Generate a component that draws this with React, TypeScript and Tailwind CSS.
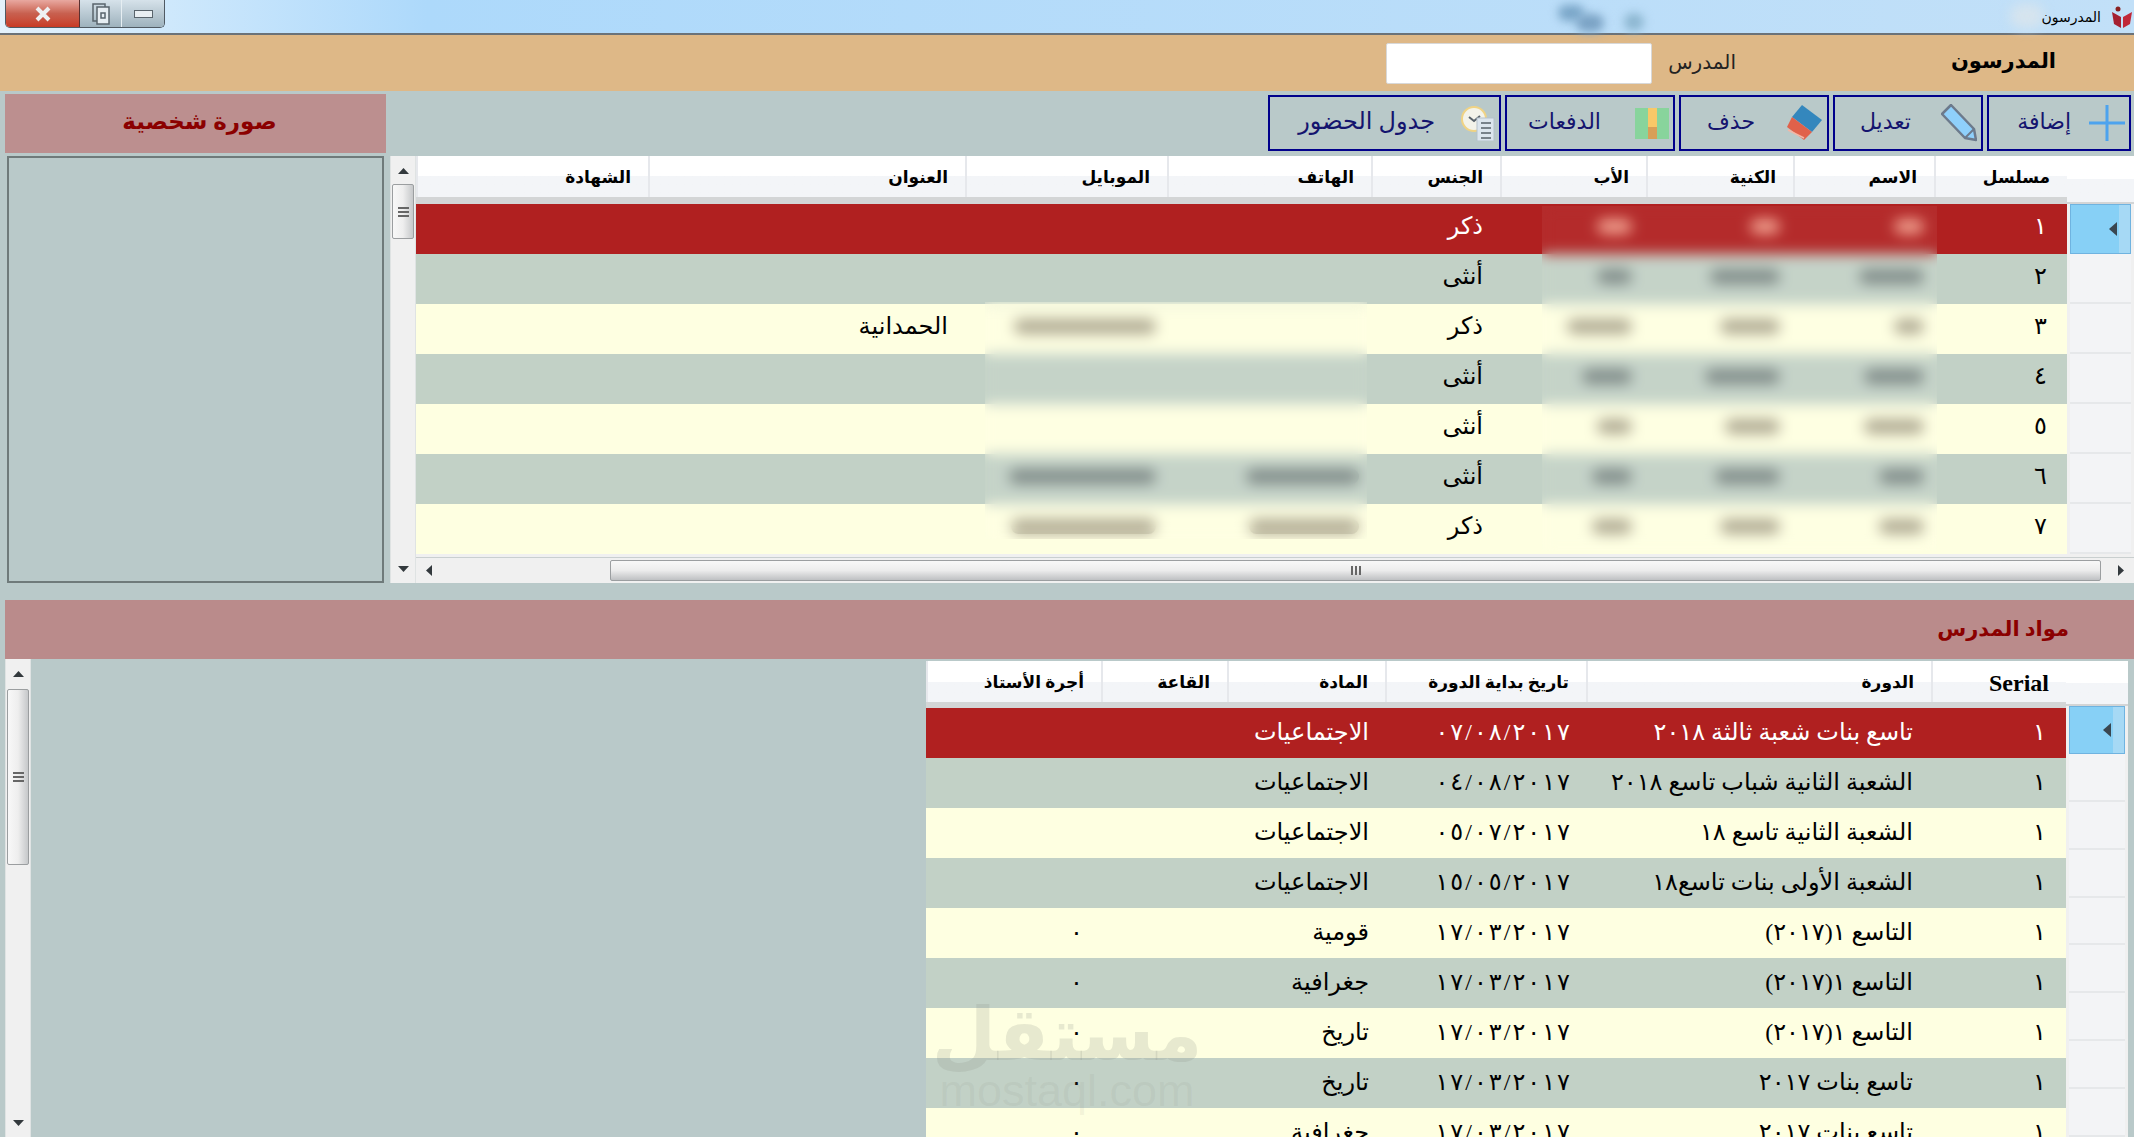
import { Fragment } from 'react';

const serif = "font-['Liberation_Serif','DejaVu_Sans',serif]";

const topCols = [
  { title: 'مسلسل' },
  { title: 'الاسم' },
  { title: 'الكنية' },
  { title: 'الأب' },
  { title: 'الجنس' },
  { title: 'الهاتف' },
  { title: 'الموبايل' },
  { title: 'العنوان' },
  { title: 'الشهادة' },
];

const teachers = [
  { n: '١', g: 'ذكر', name: 30, kunya: 30, father: 35, addr: '', phone: 0, mobile: 0 },
  { n: '٢', g: 'أنثى', name: 65, kunya: 70, father: 35, addr: '', phone: 0, mobile: 0 },
  { n: '٣', g: 'ذكر', name: 30, kunya: 60, father: 65, addr: 'الحمدانية', phone: 0, mobile: 142 },
  { n: '٤', g: 'أنثى', name: 60, kunya: 75, father: 50, addr: '', phone: 0, mobile: 0 },
  { n: '٥', g: 'أنثى', name: 60, kunya: 55, father: 35, addr: '', phone: 0, mobile: 0 },
  { n: '٦', g: 'أنثى', name: 45, kunya: 65, father: 40, addr: '', phone: 113, mobile: 147 },
  { n: '٧', g: 'ذكر', name: 45, kunya: 60, father: 40, addr: '', phone: 110, mobile: 145 },
];

const courses = [
  ['تاسع بنات شعبة ثالثة ٢٠١٨', '٠٧/٠٨/٢٠١٧', 'الاجتماعيات', ''],
  ['الشعبة الثانية شباب تاسع ٢٠١٨', '٠٤/٠٨/٢٠١٧', 'الاجتماعيات', ''],
  ['الشعبة الثانية تاسع ١٨', '٠٥/٠٧/٢٠١٧', 'الاجتماعيات', ''],
  ['الشعبة الأولى بنات تاسع١٨', '١٥/٠٥/٢٠١٧', 'الاجتماعيات', ''],
  ['التاسع ١(٢٠١٧)', '١٧/٠٣/٢٠١٧', 'قومية', '٠'],
  ['التاسع ١(٢٠١٧)', '١٧/٠٣/٢٠١٧', 'جغرافية', '٠'],
  ['التاسع ١(٢٠١٧)', '١٧/٠٣/٢٠١٧', 'تاريخ', '٠'],
  ['تاسع بنات ٢٠١٧', '١٧/٠٣/٢٠١٧', 'تاريخ', '٠'],
  ['تاسع بنات ٢٠١٧', '١٧/٠٣/٢٠١٧', 'جغرافية', '٠'],
];

function rowBg(i: number) {
  if (i === 0) return 'bg-[#b02020] text-white';
  return i % 2 === 1 ? 'bg-[#c2d1c6] text-black' : 'bg-[#feffe1] text-black';
}

function pillBg(i: number) {
  if (i === 0) return 'bg-[#f09a88]';
  return i % 2 === 1 ? 'bg-[#7b8784]' : 'bg-[#aca68e]';
}

// letter-spacing is ignored on arabic digits, so the wide date look comes from hair spaces
// the LRM keeps the digits in reading order
function spaced(date: string) {
  return date.split('').join('\u200a\u200e');
}

function HeadCell({ title }: { title: string }) {
  return (
    <div className="h-[41px] flex items-center pt-[2px] pr-[17px] border-l-2 border-[#e6e8ec] bg-gradient-to-b from-white from-50% to-[#f3f5f8] to-50% font-bold text-[17px] text-black">
      {title}
    </div>
  );
}

function RowHeader({ active }: { active: boolean }) {
  if (active) {
    return (
      <div className="h-[50px] ml-[3px] mr-[3px] bg-[#87d0f6] border border-[#6fb3e0] flex items-center justify-end">
        <svg width="8" height="14" viewBox="0 0 8 14"><path d="M8 0 L0 7 L8 14 Z" fill="#3a4650" /></svg>
        <div className="w-[11px] h-full ml-[2px] bg-[#a6d9f5]" />
      </div>
    );
  }
  return <div className="h-[50px] ml-[3px] mr-[3px] bg-[#f3f4f6] border-b-2 border-[#e6e8ea]" />;
}

function VScroll({ thumb }: { thumb: string }) {
  return (
    <div className="w-[26px] shrink-0 bg-[#f0f0f0] border-x border-[#dfe3e3] flex flex-col items-center relative">
      <svg className="mt-[12px] shrink-0" width="11" height="6" viewBox="0 0 11 6"><path d="M5.5 0 L11 6 L0 6 Z" fill="#33393d" /></svg>
      <div className={`w-[22px] shrink-0 rounded-[2px] border border-[#9b9ea0] bg-gradient-to-r from-[#f8f8f8] via-[#eeeeee] to-[#c6c8ca] flex flex-col items-center justify-center gap-[2px] ${thumb}`}>
        <div className="w-[11px] h-[2px] bg-[#666]" />
        <div className="w-[11px] h-[2px] bg-[#666]" />
        <div className="w-[11px] h-[2px] bg-[#666]" />
      </div>
      <svg className="absolute bottom-[11px]" width="11" height="6" viewBox="0 0 11 6"><path d="M0 0 L11 0 L5.5 6 Z" fill="#33393d" /></svg>
    </div>
  );
}

function HScroll() {
  return (
    <div className="h-[26px] bg-[#f0f0f0] flex items-center border-t border-[#c9cfcf]">
      <svg className="ml-[10px] shrink-0" width="6" height="11" viewBox="0 0 6 11"><path d="M6 0 L0 5.5 L6 11 Z" fill="#33393d" /></svg>
      <div className="ml-[178px] w-[1491px] h-[21px] rounded-[2px] border border-[#9b9ea0] bg-gradient-to-b from-[#f8f8f8] via-[#ececec] to-[#bfc1c3] flex items-center justify-center gap-[2px]">
        <div className="w-[2px] h-[9px] bg-[#666]" />
        <div className="w-[2px] h-[9px] bg-[#666]" />
        <div className="w-[2px] h-[9px] bg-[#666]" />
      </div>
      <svg className="ml-[17px] shrink-0" width="6" height="11" viewBox="0 0 6 11"><path d="M0 0 L6 5.5 L0 11 Z" fill="#33393d" /></svg>
    </div>
  );
}

function Pill({ width, color }: { width: number; color: string }) {
  if (!width) return null;
  return <div className={`h-[15px] rounded-full ${color}`} style={{ width }} />;
}

function ToolButton({ label, icon, className }: { label: string; icon: React.ReactNode; className: string }) {
  return (
    <button className={`h-[56px] border-2 border-[#00008b] flex items-center pr-[4px] text-[#14146e] ${className}`}>
      {icon}
      <span className="pb-[4px]">{label}</span>
    </button>
  );
}

function TopGrid() {
  return (
    <div className="flex h-[428px] flex-1 min-w-0">
      <VScroll thumb="mt-[10px] h-[55px]" />
      <div className="flex-1 flex flex-col min-w-0 bg-[#f0f0f0]">
        <div className="flex flex-1 min-h-0">
          <div dir="rtl" className="w-[1651px] flex flex-col relative overflow-hidden">
            <div className="grid grid-cols-[133px_141px_147px_146px_129px_204px_202px_317px_232px] border-b-[7px] border-b-[#d3d5d6] bg-white">
              {topCols.map((c) => (
                <HeadCell key={c.title} title={c.title} />
              ))}
            </div>
            {teachers.map((t, i) => (
              <div key={t.n} className={`h-[50px] pb-[6px] grid grid-cols-[133px_141px_147px_146px_129px_204px_202px_317px_232px] items-center text-[24px] ${rowBg(i)}`}>
                <div className="pr-[20px]">{t.n}</div>
                <div className="pr-[10px]"><Pill width={t.name} color={pillBg(i)} /></div>
                <div className="pr-[13px]"><Pill width={t.kunya} color={pillBg(i)} /></div>
                <div className="pr-[14px]"><Pill width={t.father} color={pillBg(i)} /></div>
                <div className="pr-[17px]">{t.g}</div>
                <div className="pr-[12px]"><Pill width={t.phone} color={pillBg(i)} /></div>
                <div className="pr-[11px]"><Pill width={t.mobile} color={pillBg(i)} /></div>
                <div className="pr-[17px]">{t.addr}</div>
                <div />
              </div>
            ))}
            {/* masked columns, same as the blurred parts of the screenshot */}
            <div className="absolute left-[1126px] w-[395px] top-[50px] h-[345px] backdrop-blur-[7px] bg-white/5" />
            <div className="absolute left-[569px] w-[382px] top-[146px] h-[237px] backdrop-blur-[7px] bg-white/5" />
          </div>
          <div className="flex-1 flex flex-col">
            <div className="h-[48px] bg-gradient-to-b from-white from-50% to-[#f3f5f8] to-50% border-b-2 border-[#d3d5d6]" />
            {teachers.map((t, i) => (
              <RowHeader key={t.n} active={i === 0} />
            ))}
          </div>
        </div>
        <HScroll />
      </div>
    </div>
  );
}

function BottomGrid() {
  const cols = 'grid-cols-[135px_345px_201px_158px_126px_175px]';
  return (
    <div className="flex w-[1202px] mr-[6px] mt-[2px] bg-[#f0f0f0]">
      <div dir="rtl" className="w-[1140px] relative flex flex-col">
        <div className={`grid ${cols} border-b-[6px] border-b-[#d3d5d6] bg-white`}>
          <div className="h-[41px] flex items-center pt-[2px] pr-[17px] border-l-2 border-[#e6e8ec] bg-gradient-to-b from-white from-50% to-[#f3f5f8] to-50% font-bold text-[24px] text-black font-['Liberation_Serif',serif]">Serial</div>
          <HeadCell title="الدورة" />
          <HeadCell title="تاريخ بداية الدورة" />
          <HeadCell title="المادة" />
          <HeadCell title="القاعة" />
          <HeadCell title="أجرة الأستاذ" />
        </div>
        {courses.map((c, i) => (
          <div key={i} className={`h-[50px] pb-[3px] shrink-0 grid ${cols} items-center text-[24px] ${rowBg(i)}`}>
            <div className="pr-[20px]">١</div>
            <div className="pr-[18px]">{c[0]}</div>
            <div className="pr-[16px] whitespace-nowrap"><bdi dir="ltr">{spaced(c[1])}</bdi></div>
            <div className="pr-[16px]">{c[2]}</div>
            <div />
            <div className="pr-[18px]">{c[3]}</div>
          </div>
        ))}
        {/* mostaql watermark */}
        <div className="absolute left-[12px] top-[336px] w-[258px] flex flex-col items-center pointer-events-none">
          <div className="text-[74px] leading-[76px] font-bold text-[#8b8f85]/20">مستقل</div>
          <div dir="ltr" className="text-[45px] leading-[36px] text-[#8b8f85]/10 font-['Liberation_Sans',sans-serif]">mostaql.com</div>
        </div>
      </div>
      <div className="flex-1 flex flex-col">
        <div className="h-[47px] bg-gradient-to-b from-white from-50% to-[#f3f5f8] to-50% border-b-2 border-[#d3d5d6]" />
        {courses.map((_, i) => (
          <Fragment key={i}>
            <RowHeader active={i === 0} />
          </Fragment>
        ))}
      </div>
    </div>
  );
}

export default function App() {
  return (
    <div className={`h-[1137px] w-[2134px] overflow-hidden flex flex-col bg-[#b9c9c9] text-black ${serif}`}>
      {/* title bar */}
      <div className="h-[35px] shrink-0 flex items-start relative bg-gradient-to-r from-[#e4f2fc] from-0% via-[#add9fb] via-20% to-[#c2e0f8] border-b-2 border-[#6b7278]">
        <div className="ml-[5px] h-[28px] w-[160px] flex rounded-b-[5px] border border-t-0 border-[#505a63] overflow-hidden">
          <div className="w-[74px] flex items-center justify-center bg-gradient-to-b from-[#e8a8a0] via-[#c8604f] to-[#c83a24] border-r border-[#5a3030]">
            <svg width="16" height="16" viewBox="0 0 16 16"><path d="M2 2 L14 14 M14 2 L2 14" stroke="#eef0f2" strokeWidth="4" /></svg>
          </div>
          <div className="w-[42px] flex items-center justify-center bg-gradient-to-b from-[#d6e2ea] to-[#9eb2bd] border-r border-[#e6eef2]">
            <svg width="18" height="22" viewBox="0 0 18 22" fill="none"><rect x="1" y="1" width="12" height="17" stroke="#59646c" strokeWidth="1.5" /><rect x="5" y="4" width="12" height="17" fill="#e6edf2" stroke="#59646c" strokeWidth="1.5" /><rect x="9" y="10" width="4" height="5" stroke="#59646c" strokeWidth="1.5" /></svg>
          </div>
          <div className="flex-1 flex items-center justify-center bg-gradient-to-b from-[#d6e2ea] to-[#9eb2bd]">
            <div className="w-[19px] h-[8px] bg-[#e8eef2] border border-[#59646c]" />
          </div>
        </div>
        {/* blurred shapes in the glass */}
        <div className="absolute left-[1558px] top-[5px] w-[26px] h-[16px] rounded-full bg-[#7aa6c8] blur-[5px]" />
        <div className="absolute left-[1576px] top-[14px] w-[28px] h-[18px] rounded-full bg-[#7aa2c4] blur-[5px]" />
        <div className="absolute left-[1624px] top-[13px] w-[20px] h-[18px] rounded-full bg-[#8cb6d0] blur-[5px]" />
        <div className="absolute left-[2010px] top-[4px] w-[34px] h-[24px] rounded-full bg-[#d6e4ee] blur-[6px]" />
        <div dir="rtl" className="absolute right-[2px] top-[6px] flex items-center gap-[11px]">
          <svg width="20" height="22" viewBox="0 0 20 22"><path d="M0 6 L9 11 L9 22 L2 18 Z" fill="#a52030" /><path d="M20 6 L11 11 L11 22 L18 18 Z" fill="#c02838" /><circle cx="6" cy="3" r="2.5" fill="#8a2020" /></svg>
          <span className="text-[14px] text-black font-['DejaVu_Sans',sans-serif]">المدرسون</span>
        </div>
      </div>

      {/* search strip */}
      <div dir="rtl" className="h-[56px] shrink-0 bg-[#deb887] flex items-center">
        <div className="mr-[78px] w-[162px] pb-[3px] font-bold text-[21px] text-black">المدرسون</div>
        <div className="mr-[158px] pb-[2px] text-[20px] text-[#222]">المدرس</div>
        <input className="mr-[16px] w-[266px] h-[41px] bg-white border border-[#d8d8d8] rounded-[2px]" />
      </div>

      {/* top: picture panel + teachers grid */}
      <div className="flex pt-[3px] shrink-0">
        <div className="ml-[5px] w-[381px] shrink-0 flex flex-col">
          <div className="h-[59px] pl-[8px] pb-[3px] bg-[#bc8f8f] flex items-center justify-center font-bold text-[23px] text-[#8b0000]">صورة شخصية</div>
          <div className="mx-[2px] mt-[3px] h-[427px] border-2 border-[#6f7a7a] bg-[#b9c9c9]" />
        </div>
        <div className="ml-[4px] flex-1 min-w-0 flex flex-col">
          <div dir="rtl" className="h-[62px] flex items-start pt-[1px] pr-[3px] gap-[4px]">
            <ToolButton
              label="إضافة"
              className="w-[144px] gap-[18px] text-[22px]"
              icon={<svg width="36" height="36" viewBox="0 0 36 36"><path d="M18 0 V36 M0 18 H36" stroke="#4da3ee" strokeWidth="3" /></svg>}
            />
            <ToolButton
              label="تعديل"
              className="w-[150px] gap-[30px] text-[22px]"
              icon={<svg width="36" height="38" viewBox="0 0 36 38"><path d="M1 10 L10 1 L33 25 L35 36 L24 34 Z" fill="#8fd0fb" stroke="#6c7a8c" strokeWidth="2.5" strokeLinejoin="round" /><path d="M24 34 L33 25" stroke="#6c7a8c" strokeWidth="2" /></svg>}
            />
            <ToolButton
              label="حذف"
              className="w-[150px] gap-[32px] text-[22px]"
              icon={<svg width="36" height="36" viewBox="0 0 36 36"><path d="M15 0 L35 15 L25 27 L5 12 Z" fill="#3487bd" /><path d="M5 12 L25 27 L17 35 L0 22 Z" fill="#e0614a" /><path d="M1 25 L17 33" stroke="#f3b6a6" strokeWidth="1.5" /></svg>}
            />
            <ToolButton
              label="الدفعات"
              className="w-[170px] gap-[34px] text-[22px]"
              icon={<svg width="34" height="31" viewBox="0 0 34 31"><rect width="34" height="31" fill="#88d49c" /><rect x="13" width="9" height="31" fill="#f8c868" /><rect x="13" y="19" width="9" height="12" fill="#d89f58" /></svg>}
            />
            <ToolButton
              label="جدول الحضور"
              className="w-[233px] gap-[26px] text-[24px]"
              icon={<svg width="34" height="35" viewBox="0 0 34 35"><circle cx="13" cy="13" r="12" fill="#f3f3ea" stroke="#f0d384" strokeWidth="2" /><path d="M8 11 L13 15 L19 10" stroke="#59636b" strokeWidth="2" fill="none" /><rect x="16" y="12" width="17" height="23" fill="#dce6ee" stroke="#b5c2cc" /><path d="M20 17 H30 M20 22 H30 M20 27 H30 M20 32 H30" stroke="#56616a" strokeWidth="1.5" /></svg>}
            />
          </div>
          <TopGrid />
        </div>
      </div>

      {/* bottom: teacher's subjects */}
      <div className="mt-[17px] ml-[5px] h-[59px] shrink-0 bg-[#ba8b8b] flex items-center justify-end pr-[65px] font-bold text-[21px] text-[#8b0000]">مواد المدرس</div>
      <div className="flex-1 min-h-0 flex justify-between ml-[5px] overflow-hidden">
        <VScroll thumb="mt-[12px] h-[176px]" />
        <BottomGrid />
      </div>
    </div>
  );
}
